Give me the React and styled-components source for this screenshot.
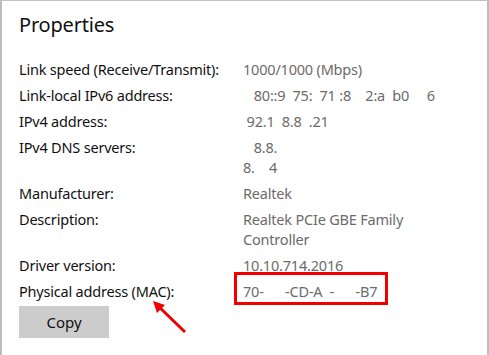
import React from 'react';
import styled, { createGlobalStyle } from 'styled-components';

const GlobalStyle = createGlobalStyle`
  html, body {
    margin: 0;
    padding: 0;
    background: #ffffff;
  }
  body {
    font-family: "Noto Sans", "Open Sans", sans-serif;
  }
`;

const StyledPanel = styled.div`
  position: relative;
  box-sizing: border-box;
  width: 489px;
  height: 355px;
  overflow: hidden;
  border-top: 1px solid #c2c2c2;
  border-left: 2px solid #bcbcbc;
  border-right: 2px solid #bcbcbc;
  padding: 0 0 0 17px;
  background: #ffffff;
`;

const StyledTitle = styled.h2`
  margin: 0;
  padding-top: 10px;
  font-size: 20px;
  font-weight: 400;
  line-height: 28px;
  letter-spacing: -0.2px;
  color: #111;
`;

const StyledList = styled.div`
  display: flex;
  flex-direction: column;
  gap: 6px;
  margin-top: 20px;
`;

const StyledRow = styled.div`
  display: grid;
  grid-template-columns: 224px 200px;
  font-size: 14.5px;
  letter-spacing: -0.2px;
  line-height: 20px;
`;

const StyledLabel = styled.div`
  color: #111;
`;

const StyledValue = styled.div`
  color: #6b6b6b;
  white-space: pre;
`;

const StyledWrapValue = styled.div`
  color: #6b6b6b;
`;

const StyledHighlight = styled.span`
  position: relative;
  white-space: pre;

  &::after {
    content: '';
    position: absolute;
    left: -9px;
    top: -9px;
    width: 154px;
    height: 33px;
    box-sizing: border-box;
    border: 3px solid #f20000;
  }
`;

const StyledButton = styled.button`
  width: 90px;
  height: 32px;
  margin-top: 5px;
  border: none;
  background: #cccccc;
  color: #111;
  font-family: inherit;
  font-size: 15px;
  padding: 0;
`;

const StyledArrow = styled.svg`
  position: absolute;
  left: 140px;
  top: 291px;
`;

const rows = [
  ['Link speed (Receive/Transmit):', '1000/1000 (Mbps)'],
  ['Link-local IPv6 address:', '   80::9  75:  71 :8    2:a  b0     6'],
  ['IPv4 address:', ' 92.1  8.8  .21'],
  ['IPv4 DNS servers:', '   8.8.\n8.    4'],
  ['Manufacturer:', 'Realtek'],
];

export default function App() {
  return (
    <StyledPanel>
      <GlobalStyle />
      <StyledTitle>Properties</StyledTitle>
      <StyledList>
        {rows.map(([label, value]) => (
          <StyledRow key={label}>
            <StyledLabel>{label}</StyledLabel>
            <StyledValue>{value}</StyledValue>
          </StyledRow>
        ))}
        <StyledRow>
          <StyledLabel>Description:</StyledLabel>
          <StyledWrapValue>Realtek PCIe GBE Family Controller</StyledWrapValue>
        </StyledRow>
        <StyledRow>
          <StyledLabel>Driver version:</StyledLabel>
          <StyledValue>10.10.714.2016</StyledValue>
        </StyledRow>
        <StyledRow>
          <StyledLabel>Physical address (MAC):</StyledLabel>
          <StyledValue>
            <StyledHighlight>{'70-      -CD-A  -      -B7'}</StyledHighlight>
          </StyledValue>
        </StyledRow>
      </StyledList>
      <StyledButton>Copy</StyledButton>
      <StyledArrow width="50" height="50" viewBox="0 0 50 50">
        <line x1="43" y1="40" x2="14" y2="12" stroke="#f20000" strokeWidth="3" />
        <polygon points="11,9 23,13 15,21" fill="#f20000" />
      </StyledArrow>
    </StyledPanel>
  );
}
